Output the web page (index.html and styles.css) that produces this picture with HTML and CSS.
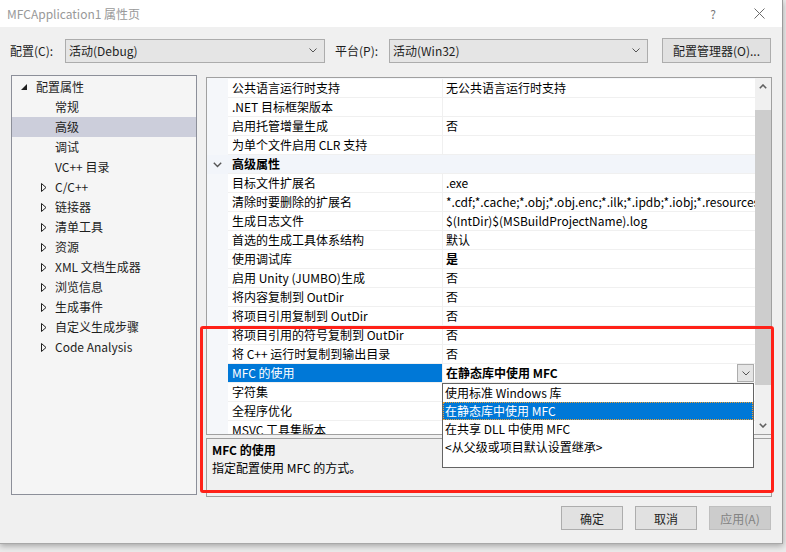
FILE: index.html
```html
<!DOCTYPE html>
<html lang="zh-CN">
<head>
    <meta charset="UTF-8">
    <title>MFCApplication1 属性页</title>
    <link rel="stylesheet" href="styles.css">
</head>
<body>

    <!-- bits of the window behind -->
    <div class="taskbit taskbit-a"></div>
    <div class="taskbit taskbit-b"></div>

    <div class="dialog">
        <div class="titlebar">
            <span class="title">MFCApplication1 属性页</span>
            <span class="help">?</span>
            <svg class="close" width="11" height="11" viewBox="0 0 11 11">
                <path d="M0.5 0.5 L10.5 10.5 M10.5 0.5 L0.5 10.5" stroke="#6b6b6b" stroke-width="1" fill="none"/>
            </svg>
        </div>

        <div class="config-row">
            <span class="lbl lbl-cfg">配置(C):</span>
            <div class="combo combo-cfg">
                <span>活动(Debug)</span>
                <svg width="8" height="5" viewBox="0 0 8 5"><path d="M0.5 0.5 L4 4 L7.5 0.5" stroke="#555" fill="none"/></svg>
            </div>
            <span class="lbl lbl-plat">平台(P):</span>
            <div class="combo combo-plat">
                <span>活动(Win32)</span>
                <svg width="8" height="5" viewBox="0 0 8 5"><path d="M0.5 0.5 L4 4 L7.5 0.5" stroke="#555" fill="none"/></svg>
            </div>
            <button class="btn btn-mgr">配置管理器(O)...</button>
        </div>

        <div class="main">
            <!-- left tree -->
            <div class="tree">
                <div class="node root">
                    <span class="twist"><svg width="6" height="6" viewBox="0 0 6 6"><polygon points="6,0 6,6 0,6" fill="#1e1e1e"/></svg></span>配置属性
                </div>
                <div class="node leaf">常规</div>
                <div class="node leaf sel">高级</div>
                <div class="node leaf">调试</div>
                <div class="node leaf">VC++ 目录</div>
                <div class="node branch"><span class="twist"><svg width="6" height="9" viewBox="0 0 6 9"><polygon points="0.5,0.5 5,4.5 0.5,8.5" fill="none" stroke="#1e1e1e"/></svg></span>C/C++</div>
                <div class="node branch"><span class="twist"><svg width="6" height="9" viewBox="0 0 6 9"><polygon points="0.5,0.5 5,4.5 0.5,8.5" fill="none" stroke="#1e1e1e"/></svg></span>链接器</div>
                <div class="node branch"><span class="twist"><svg width="6" height="9" viewBox="0 0 6 9"><polygon points="0.5,0.5 5,4.5 0.5,8.5" fill="none" stroke="#1e1e1e"/></svg></span>清单工具</div>
                <div class="node branch"><span class="twist"><svg width="6" height="9" viewBox="0 0 6 9"><polygon points="0.5,0.5 5,4.5 0.5,8.5" fill="none" stroke="#1e1e1e"/></svg></span>资源</div>
                <div class="node branch"><span class="twist"><svg width="6" height="9" viewBox="0 0 6 9"><polygon points="0.5,0.5 5,4.5 0.5,8.5" fill="none" stroke="#1e1e1e"/></svg></span>XML 文档生成器</div>
                <div class="node branch"><span class="twist"><svg width="6" height="9" viewBox="0 0 6 9"><polygon points="0.5,0.5 5,4.5 0.5,8.5" fill="none" stroke="#1e1e1e"/></svg></span>浏览信息</div>
                <div class="node branch"><span class="twist"><svg width="6" height="9" viewBox="0 0 6 9"><polygon points="0.5,0.5 5,4.5 0.5,8.5" fill="none" stroke="#1e1e1e"/></svg></span>生成事件</div>
                <div class="node branch"><span class="twist"><svg width="6" height="9" viewBox="0 0 6 9"><polygon points="0.5,0.5 5,4.5 0.5,8.5" fill="none" stroke="#1e1e1e"/></svg></span>自定义生成步骤</div>
                <div class="node branch"><span class="twist"><svg width="6" height="9" viewBox="0 0 6 9"><polygon points="0.5,0.5 5,4.5 0.5,8.5" fill="none" stroke="#1e1e1e"/></svg></span>Code Analysis</div>
            </div>

            <!-- property grid + description -->
            <div class="side">
                <div class="grid">
                    <div class="rows">
                        <div class="row"><div class="gut"></div><div class="name">公共语言运行时支持</div><div class="val">无公共语言运行时支持</div></div>
                        <div class="row"><div class="gut"></div><div class="name">.NET 目标框架版本</div><div class="val"></div></div>
                        <div class="row"><div class="gut"></div><div class="name">启用托管增量生成</div><div class="val">否</div></div>
                        <div class="row"><div class="gut"></div><div class="name">为单个文件启用 CLR 支持</div><div class="val"></div></div>
                        <div class="row head">
                            <div class="gut"><svg width="9" height="6" viewBox="0 0 9 6"><path d="M0.8 0.8 L4.5 4.5 L8.2 0.8" stroke="#555" stroke-width="1.4" fill="none"/></svg></div>
                            <div class="name">高级属性</div><div class="val"></div>
                        </div>
                        <div class="row"><div class="gut"></div><div class="name">目标文件扩展名</div><div class="val">.exe</div></div>
                        <div class="row"><div class="gut"></div><div class="name">清除时要删除的扩展名</div><div class="val">*.cdf;*.cache;*.obj;*.obj.enc;*.ilk;*.ipdb;*.iobj;*.resources;*.tlb;*.tli</div></div>
                        <div class="row"><div class="gut"></div><div class="name">生成日志文件</div><div class="val">$(IntDir)$(MSBuildProjectName).log</div></div>
                        <div class="row"><div class="gut"></div><div class="name">首选的生成工具体系结构</div><div class="val">默认</div></div>
                        <div class="row"><div class="gut"></div><div class="name">使用调试库</div><div class="val bold">是</div></div>
                        <div class="row"><div class="gut"></div><div class="name">启用 Unity (JUMBO)生成</div><div class="val">否</div></div>
                        <div class="row"><div class="gut"></div><div class="name">将内容复制到 OutDir</div><div class="val">否</div></div>
                        <div class="row"><div class="gut"></div><div class="name">将项目引用复制到 OutDir</div><div class="val">否</div></div>
                        <div class="row"><div class="gut"></div><div class="name">将项目引用的符号复制到 OutDir</div><div class="val">否</div></div>
                        <div class="row"><div class="gut"></div><div class="name">将 C++ 运行时复制到输出目录</div><div class="val">否</div></div>
                        <div class="row active">
                            <div class="gut"></div>
                            <div class="name">MFC 的使用</div>
                            <div class="val bold">
                                <span class="val-text">在静态库中使用 MFC</span>
                                <span class="drop-btn"><svg width="8" height="5" viewBox="0 0 8 5"><path d="M0.5 0.5 L4 4 L7.5 0.5" stroke="#555" fill="none"/></svg></span>
                            </div>
                        </div>
                        <div class="row"><div class="gut"></div><div class="name">字符集</div><div class="val">使用 Unicode 字符集</div></div>
                        <div class="row"><div class="gut"></div><div class="name">全程序优化</div><div class="val">无全程序优化</div></div>
                        <div class="row"><div class="gut"></div><div class="name">MSVC 工具集版本</div><div class="val">默认</div></div>
                    </div>

                    <div class="vscroll">
                        <div class="sbtn"><svg width="8" height="5" viewBox="0 0 8 5"><path d="M0.8 4.2 L4 1 L7.2 4.2" stroke="#606060" stroke-width="1.6" fill="none"/></svg></div>
                        <div class="thumb"></div>
                        <div class="sbtn sbtn-down"><svg width="8" height="5" viewBox="0 0 8 5"><path d="M0.8 0.8 L4 4 L7.2 0.8" stroke="#606060" stroke-width="1.6" fill="none"/></svg></div>
                    </div>

                    <!-- open drop-down of "MFC 的使用" -->
                    <div class="droplist">
                        <div class="opt">使用标准 Windows 库</div>
                        <div class="opt picked">在静态库中使用 MFC</div>
                        <div class="opt">在共享 DLL 中使用 MFC</div>
                        <div class="opt">&lt;从父级或项目默认设置继承&gt;</div>
                    </div>
                </div>

                <div class="desc">
                    <div class="desc-title">MFC 的使用</div>
                    <div>指定配置使用 MFC 的方式。</div>
                </div>
            </div>
        </div>

        <div class="buttons">
            <button class="btn btn-dlg">确定</button>
            <button class="btn btn-dlg">取消</button>
            <button class="btn btn-dlg" disabled>应用(A)</button>
        </div>
    </div>

    <!-- red highlight drawn over the screenshot -->
    <div class="mark"></div>

</body>
</html>
```

FILE: styles.css
```css
body {
    margin: 0;
    width: 786px;
    height: 552px;
    background: #ebebeb;
    font-family: "Noto Sans CJK SC", "Microsoft YaHei", sans-serif;
    font-size: 12px;
    color: #1e1e1e;
    position: relative;
    overflow: hidden;
}

.taskbit {
    position: absolute;
    top: 542px;
    height: 2px;
    background: #2f7fd9;
}

.taskbit-a { left: 0; width: 27px; }
.taskbit-b { left: 183px; width: 22px; }

.dialog {
    position: relative;
    width: 783px;
    height: 544px;
    background: #f0f0f0;
    border-right: 1px solid #9b9b9b;
    border-bottom: 1px solid #a8a8a8;
    box-sizing: border-box;
    box-shadow: 0 2px 6px rgba(0, 0, 0, 0.3);
}

/* Title bar */
.titlebar {
    height: 27px;
    background: #fff;
    display: flex;
    align-items: center;
    padding-left: 7px;
}

.title {
    flex: 1;
    color: #999;
    font-size: 12px;
}

.help {
    color: #777;
    font-size: 12px;
    margin-right: 38px;
}

.close {
    margin-right: 17px;
}

/* Configuration row */
.config-row {
    display: flex;
    align-items: center;
    height: 25px;
    margin-top: 11px;
    padding-left: 10px;
}

.lbl-cfg { width: 55px; }
.lbl-plat { width: 54px; margin-left: 10px; }

.combo {
    height: 24px;
    box-sizing: border-box;
    border: 1px solid #acacac;
    background: #e5e5e5;
    display: flex;
    align-items: center;
    padding: 0 7px 0 3px;
}

.combo span { flex: 1; }
.combo-cfg { width: 260px; }
.combo-plat { width: 259px; }

.btn {
    height: 25px;
    box-sizing: border-box;
    border: 1px solid #adadad;
    background: #e1e1e1;
    font-family: inherit;
    font-size: 12px;
    color: #1e1e1e;
    padding: 0;
}

.btn-mgr {
    width: 109px;
    margin-left: 14px;
}

/* Main area */
.main {
    display: flex;
    align-items: flex-start;
    height: 422px;
    margin-top: 12px;
    padding-left: 11px;
}

.tree {
    width: 186px;
    height: 420px;
    box-sizing: border-box;
    border: 1px solid #8c8f99;
    background: #f5f5f5;
    padding-top: 1px;
}

.node {
    height: 20px;
    line-height: 20px;
    display: flex;
    align-items: center;
    white-space: nowrap;
}

.node .twist {
    display: flex;
    align-items: center;
}

.root { padding-left: 9px; }
.root .twist { width: 15px; }
.leaf { padding-left: 43px; }
.branch { padding-left: 29px; }
.branch .twist { width: 14px; }

.sel { background: #cccedb; }

.side {
    width: 566px;
    margin-left: 9px;
    padding-top: 2px;
}

/* Property grid */
.grid {
    position: relative;
    display: flex;
    height: 358px;
    box-sizing: border-box;
    border: 1px solid #a0a0a0;
    background: #fff;
}

.rows {
    flex: 1;
    overflow: hidden;
    padding-top: 1px;
    background: #f5f7fa;
}

.row {
    display: grid;
    grid-template-columns: 21px 214px 1fr;
    height: 19px;
}

.gut {
    background: #f5f7fa;
    display: flex;
    align-items: center;
    justify-content: center;
}

.name,
.val {
    line-height: 18px;
    border-bottom: 1px solid #f0f0f0;
    white-space: nowrap;
    overflow: hidden;
    background: #fff;
    color: #000;
}

.name { padding-left: 4px; }

.val {
    padding-left: 3px;
    border-left: 1px solid #f0f0f0;
}

.bold { font-weight: bold; }

.head .name,
.head .val {
    background: #f2f5fa;
    font-weight: bold;
    border-left: none;
}

.head .gut { background: #f2f5fa; }

.active .name {
    background: #0078d7;
    color: #fff;
}

.active .val {
    display: flex;
    align-items: center;
}

.val-text { flex: 1; }

.drop-btn {
    width: 17px;
    height: 18px;
    box-sizing: border-box;
    border: 1px solid #adadad;
    background: #e5e5e5;
    display: flex;
    align-items: center;
    justify-content: center;
    margin-right: 1px;
}

.vscroll {
    width: 16px;
    display: flex;
    flex-direction: column;
    background: #f0f0f0;
}

.sbtn {
    height: 17px;
    display: flex;
    align-items: center;
    justify-content: center;
}

.thumb {
    height: 275px;
    margin-top: 15px;
    background: #cdcdcd;
}

.sbtn-down { margin-top: auto; }

.droplist {
    position: absolute;
    left: 235px;
    top: 305px;
    width: 312px;
    height: 85px;
    box-sizing: border-box;
    border: 1px solid #646464;
    background: #fff;
}

.opt {
    height: 18px;
    line-height: 18px;
    padding-left: 2px;
    color: #000;
    white-space: nowrap;
}

.opt.picked {
    background: #0078d7;
    color: #fff;
    outline: 1px dotted #f0a030;
    outline-offset: -1px;
}

/* Description */
.desc {
    margin-top: 3px;
    height: 59px;
    box-sizing: border-box;
    border: 1px solid #a0a0a0;
    padding: 2px 5px;
    line-height: 18px;
    color: #000;
}

.desc-title { font-weight: bold; }

/* Bottom buttons */
.buttons {
    display: flex;
    justify-content: flex-end;
    gap: 12px;
    margin-top: 9px;
    padding-right: 11px;
}

.btn-dlg {
    width: 62px;
    height: 24px;
}

.btn-dlg:disabled {
    background: #cccccc;
    border-color: #bfbfbf;
    color: #838383;
}

/* Red highlight */
.mark {
    position: absolute;
    left: 200px;
    top: 326px;
    width: 574px;
    height: 167px;
    box-sizing: border-box;
    border: 3px solid #ff2118;
    border-radius: 3px;
}
```
